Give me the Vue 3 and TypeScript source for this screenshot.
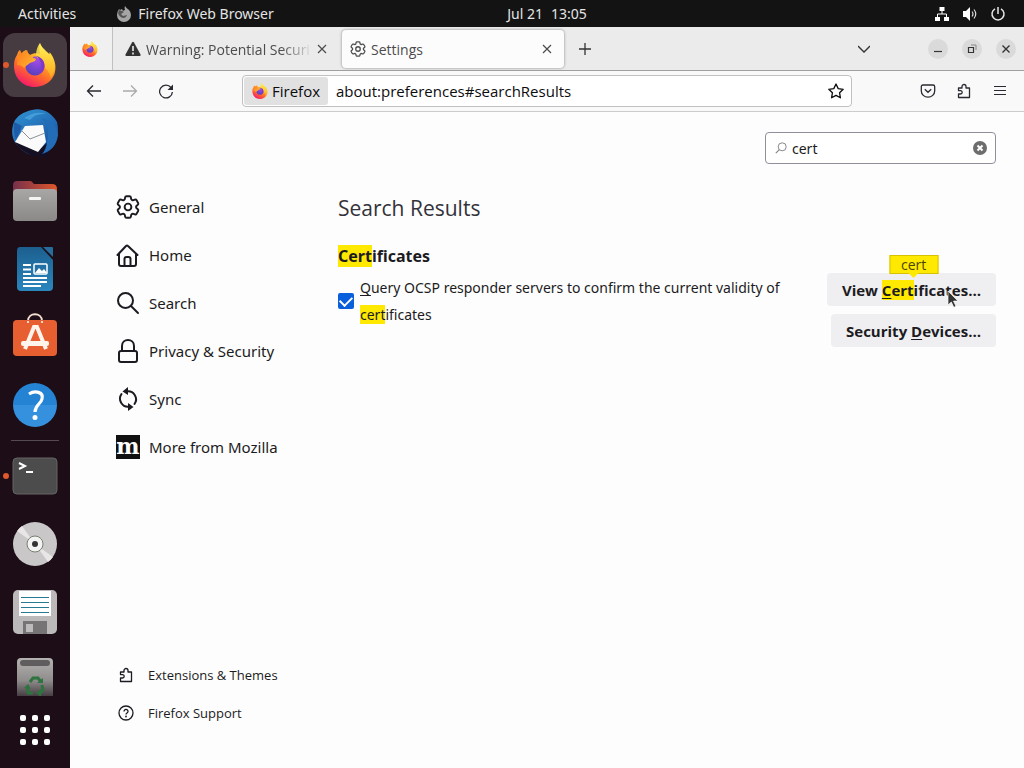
<script setup lang="ts">
import { ref } from 'vue'

interface NavItem {
  label: string
  icon: string
}

const categories: NavItem[] = [
  { label: 'General', icon: 'gear' },
  { label: 'Home', icon: 'home' },
  { label: 'Search', icon: 'search' },
  { label: 'Privacy & Security', icon: 'lock' },
  { label: 'Sync', icon: 'sync' },
  { label: 'More from Mozilla', icon: 'mozilla' },
]

const footerLinks: NavItem[] = [
  { label: 'Extensions & Themes', icon: 'puzzle' },
  { label: 'Firefox Support', icon: 'help' },
]

const apps = [
  { name: 'Firefox', icon: 'firefox', active: true, running: true },
  { name: 'Thunderbird', icon: 'thunderbird' },
  { name: 'Files', icon: 'files' },
  { name: 'Writer', icon: 'writer' },
  { name: 'Software', icon: 'software' },
  { name: 'Help', icon: 'yelp' },
]

const places = [
  { name: 'Terminal', icon: 'terminal', running: true },
  { name: 'Disc', icon: 'disc' },
  { name: 'Floppy', icon: 'floppy' },
  { name: 'Trash', icon: 'trash', clipped: true },
]

const query = ref('cert')
const address = ref('about:preferences#searchResults')
const ocsp = ref(true)
</script>

<template>
  <div class="desktop">
    <svg class="defs" aria-hidden="true">
      <defs>
        <linearGradient id="fxBody" x1="0.8" y1="0.05" x2="0.3" y2="1">
          <stop offset="0" stop-color="#fff44f" />
          <stop offset="0.35" stop-color="#ffb024" />
          <stop offset="0.65" stop-color="#ff6a2c" />
          <stop offset="1" stop-color="#f5166b" />
        </linearGradient>
        <radialGradient id="fxCore" cx="0.6" cy="0.2" r="0.9">
          <stop offset="0" stop-color="#a44be8" />
          <stop offset="1" stop-color="#4b3fb8" />
        </radialGradient>
        <linearGradient id="fxTail" x1="0.6" y1="0" x2="0.6" y2="1">
          <stop offset="0" stop-color="#fff35a" />
          <stop offset="1" stop-color="#ffae1f" />
        </linearGradient>
        <linearGradient id="fxHead" x1="0" y1="0" x2="1" y2="0.6">
          <stop offset="0" stop-color="#ff7a1e" />
          <stop offset="1" stop-color="#ffb22e" />
        </linearGradient>
        <linearGradient id="blueBird" x1="0.2" y1="0" x2="0.8" y2="1">
          <stop offset="0" stop-color="#2f8fd0" />
          <stop offset="1" stop-color="#154a9c" />
        </linearGradient>
        <linearGradient id="folderBack" x1="0" y1="0" x2="1" y2="0">
          <stop offset="0" stop-color="#76304a" />
          <stop offset="1" stop-color="#e0562b" />
        </linearGradient>
        <linearGradient id="silver" x1="0" y1="0" x2="0" y2="1">
          <stop offset="0" stop-color="#a9a7a6" />
          <stop offset="1" stop-color="#8b8988" />
        </linearGradient>
        <linearGradient id="docBlue" x1="0" y1="0" x2="0" y2="1">
          <stop offset="0" stop-color="#1c5f8f" />
          <stop offset="1" stop-color="#2a86bd" />
        </linearGradient>
        <linearGradient id="helpBlue" x1="0" y1="0" x2="0" y2="1">
          <stop offset="0.5" stop-color="#2583d3" />
          <stop offset="0.5" stop-color="#3590dd" />
        </linearGradient>
        <linearGradient id="trashFade" x1="0" y1="0" x2="0" y2="1">
          <stop offset="0" stop-color="#b5b3b2" />
          <stop offset="0.5" stop-color="#8f8c8c" />
          <stop offset="0.85" stop-color="#453c42" />
        </linearGradient>
      </defs>
      <symbol id="firefox" viewBox="0 0 44 44">
        <path d="M27 0c1 4 5 7 9 11q1 0 .5-2c5 6 7.500 14 5 22-3 8-11 13-20 13C10 44 1 35 1 23c0-5 1-8 3-11q1-4 3-5 0 3 1 4 2-3 5-4 1 4 4 5c3-2 7-2 10-1-1-5-1-8 0-11z" fill="url(#fxBody)" />
        <circle cx="22" cy="23" r="9.500" fill="url(#fxCore)" />
        <path d="M27 0c1 4 5 7 9 11 6 6 8 14 2 24-1-4-2-7-6-10 0-6-3-9-8-10-2-5 0-11 3-15z" fill="url(#fxTail)" opacity=".85" />
        <path d="M23 13c6 1 10 6 8 13-1 3-4 5-7 6 6-5 6-14-1-19z" fill="#8038c8" />
        <path d="M5 12q1-4 2-5l2 4q2-3 5-4 1 4 3 5c2 2 4 3 6 4 0 2-3 3-6 4-2 2-5 3-6 5-1-2-4-3-7-3z" fill="url(#fxHead)" />
      </symbol>
      <symbol id="firefox-mono" viewBox="0 0 16 16">
        <path d="M9 0q1 2 4 4 2 2 2 5a7 7 0 0 1-14 0q0-3 2-6l1 1 2-1 1 2q1-1 2-1-1-2 0-4z" fill="#a5a5a5" />
        <path d="M3 4l3 1 2 1-3 2 2 2 4-1q-1 3-4 3-4-1-5-5z" fill="#555" />
      </symbol>
      <symbol id="thunderbird" viewBox="0 0 48 48">
        <path d="M21 1c10-3 20 3 25 12 3 12-1 24-13 33-8 2-18 0-25-8C0 31 0 21 3 13 6 7 12 3 21 1z" fill="url(#blueBird)" />
        <path d="M13 9q12-8 22-4-11-1-16 6z" fill="#55b0e4" opacity=".6" />
        <path d="M4 33l25 7 7-6q4 6 0 14-8 1-16-2Q8 41 4 33z" fill="#140f22" />
        <path d="M14 17L32 16 35 33 27 43 4 33z" fill="#fafafa" />
        <path d="M10 21l9 9 15-6" fill="none" stroke="#8a9097" />
        <path d="M30 9q10 9 6 24-1 8-5 12 14-4 16-19Q46 13 30 9z" fill="#236db8" />
        <path d="M3 13q-1 10 2 18l6-14z" fill="#1d5ca9" />
      </symbol>
      <symbol id="files" viewBox="0 0 46 42">
        <path d="M1 14V5q0-4 4-4h13q2 0 3 2l1 1h18q5 0 5 5v7z" fill="url(#folderBack)" />
        <rect x="1" y="9" width="44" height="32" rx="4" fill="url(#silver)" />
        <rect x="17" y="17" width="12" height="3" rx="1" fill="#f5f5f5" />
      </symbol>
      <symbol id="writer" viewBox="0 0 38 46">
        <path d="M4 1h21l12 13v27q0 4-4 4H5q-4 0-4-4V5q0-4 3-4z" fill="url(#docBlue)" />
        <path d="M27 1h9q1 0 1 1v9z" fill="#286c9c" />
        <path d="M7 19h8M7 23.500h8M7 28h8M7 32h24M7 36h24M7 40h18" stroke="#fff" stroke-width="2" />
        <rect x="18" y="18" width="13" height="10" rx="1" fill="none" stroke="#fff" stroke-width="1.500" />
        <path d="M19 27l4-5 3 3 2-2 3 4z" fill="#fff" />
      </symbol>
      <symbol id="software" viewBox="0 0 46 44">
        <path d="M16 8c0-9 14-9 14 0" fill="none" stroke="#f4dccf" stroke-width="2" />
        <rect x="1" y="7" width="44" height="36" rx="4" fill="#e75f31" />
        <path d="M16 8v2M30 8v2" stroke="#fff" stroke-width="1.500" />
        <path d="M13 36l9-22h3l9 22" fill="none" stroke="#fff4ec" stroke-width="4" />
        <rect x="9" y="28" width="28" height="5" rx="2" fill="#fff4ec" />
      </symbol>
      <symbol id="yelp" viewBox="0 0 46 46">
        <circle cx="23" cy="23" r="22" fill="url(#helpBlue)" />
        <path d="M17 12c6-4 15-2 13 5-1 5-7 6-7 13" fill="none" stroke="#fff" stroke-width="3.200" />
        <circle cx="23" cy="35.500" r="2.500" fill="#fff" />
      </symbol>
      <symbol id="terminal" viewBox="0 0 46 38">
        <rect x="1" y="1" width="44" height="36" rx="4" fill="#4c4c4c" stroke="#656565" />
        <path d="M7 6l6 3-6 3M14 15h7" fill="none" stroke="#fff" stroke-width="2" />
      </symbol>
      <symbol id="disc" viewBox="0 0 46 46">
        <circle cx="23" cy="23" r="22" fill="#c9c7c8" />
        <path d="M5 10l36 26q-2 3-5 5L10 5q-3 2-5 5z" fill="#e8e6e7" />
        <circle cx="23" cy="23" r="8" fill="#f3f3f3" stroke="#77806f" />
        <circle cx="23" cy="23" r="3" fill="#333" />
      </symbol>
      <symbol id="floppy" viewBox="0 0 46 46">
        <rect x="1" y="1" width="44" height="44" rx="5" fill="#bcb9ba" />
        <rect x="7" y="2" width="32" height="25" fill="#fff" />
        <path d="M9 8.500h28M9 13.500h28M9 18.500h28M9 23.500h28" stroke="#287a93" />
        <path d="M11 32h24v13H11z" fill="#777475" />
        <path d="M14 35h7v8h-7z" fill="#bdbbbb" />
      </symbol>
      <symbol id="trash" viewBox="0 0 38 46">
        <path d="M1 46V5q0-4 4-4h28q4 0 4 4v41z" fill="url(#trashFade)" />
        <rect x="4" y="3" width="30" height="6" rx="3" fill="#5f5d5d" />
        <path d="M14 25l3-4h5l3 4M26 28l1 5-3 3M17 36h-5l-1-6" fill="none" stroke="#2d743e" stroke-width="3" />
        <path d="M21 26h6v-5zM25 32l-5 4 5 4zM8 31l4-4 3 5z" fill="#2d743e" />
      </symbol>
      <symbol id="gear" viewBox="2 2 20 20">
        <path d="M9.594 3.940c.09-.542.56-.94 1.110-.94h2.593c.55 0 1.020.398 1.110.94l.213 1.281c.063.374.313.686.645.87.074.04.147.083.22.127.325.196.72.257 1.075.124l1.217-.456a1.125 1.125 0 0 1 1.370.49l1.296 2.247a1.125 1.125 0 0 1-.26 1.431l-1.003.827c-.293.241-.438.613-.43.992a7.723 7.723 0 0 1 0 .255c-.008.378.137.75.43.991l1.004.827c.424.35.534.955.26 1.430l-1.298 2.247a1.125 1.125 0 0 1-1.369.491l-1.217-.456c-.355-.133-.75-.072-1.076.124a6.470 6.470 0 0 1-.22.128c-.331.183-.581.495-.644.869l-.213 1.281c-.09.543-.56.94-1.110.94h-2.594c-.55 0-1.019-.398-1.110-.94l-.213-1.281c-.062-.374-.312-.686-.644-.87a6.520 6.520 0 0 1-.22-.127c-.325-.196-.72-.257-1.076-.124l-1.217.456a1.125 1.125 0 0 1-1.369-.49l-1.297-2.247a1.125 1.125 0 0 1 .26-1.431l1.004-.827c.292-.24.437-.613.43-.991a6.932 6.932 0 0 1 0-.255c.007-.38-.138-.751-.43-.992l-1.004-.827a1.125 1.125 0 0 1-.26-1.430l1.297-2.247a1.125 1.125 0 0 1 1.370-.491l1.216.456c.356.133.751.072 1.076-.124.072-.044.146-.087.22-.128.332-.183.582-.495.644-.869l.214-1.280Z" fill="none" stroke="currentColor" stroke-width="1.600" />
        <circle cx="12" cy="12" r="2.800" fill="none" stroke="currentColor" stroke-width="1.600" />
      </symbol>
      <symbol id="home" viewBox="0 0 24 24">
        <path d="M1.500 12L10 3q1-1 2 0l9.500 9M3 11v10q0 2 2 2h13q2 0 2-2V11M8.500 23v-7q0-2 2-2h2q2 0 2 2v7" fill="none" stroke="currentColor" stroke-width="2" stroke-linecap="round" stroke-linejoin="round" />
      </symbol>
      <symbol id="search" viewBox="0 0 24 24">
        <circle cx="9.500" cy="9.500" r="7.500" fill="none" stroke="currentColor" stroke-width="2" />
        <path d="M15 15l7 7" stroke="currentColor" stroke-width="2" stroke-linecap="round" />
      </symbol>
      <symbol id="lock" viewBox="0 0 24 24">
        <path d="M6 12V7c0-8 12-8 12 0v5" fill="none" stroke="currentColor" stroke-width="2" />
        <rect x="3" y="12" width="18" height="11" rx="2" fill="none" stroke="currentColor" stroke-width="2" />
      </symbol>
      <symbol id="sync" viewBox="0 0 24 24">
        <path d="M10.500 4.500a8 8 0 0 1 8 12.500M5.500 7a8 8 0 0 0 8 12.500" fill="none" stroke="currentColor" stroke-width="2" stroke-linecap="round" />
        <path d="M12 0v8L6.500 4.500zM12 16v8l5.500-4z" fill="currentColor" />
      </symbol>
      <symbol id="puzzle" viewBox="0 0 16 16">
        <path d="M3 5h3V3.500a2 2 0 0 1 4 0V5h3.500v9.500h-11V11h2a1.700 1.700 0 0 0 0-3.400H2.500V5z" fill="none" stroke="currentColor" stroke-width="1.300" stroke-linejoin="round" />
      </symbol>
      <symbol id="help" viewBox="0 0 16 16">
        <circle cx="8" cy="8" r="7" fill="none" stroke="currentColor" stroke-width="1.300" />
        <path d="M6 6.500c0-3 4.200-2.500 4 0 0 1.500-2 1.500-2 3" fill="none" stroke="currentColor" stroke-width="1.300" />
        <circle cx="8" cy="11.500" r=".9" fill="currentColor" />
      </symbol>
      <symbol id="close" viewBox="0 0 10 10">
        <path d="M1 1l8 8M9 1L1 9" fill="none" stroke="currentColor" stroke-width="1.200" />
      </symbol>
    </svg>

    <header class="panel">
      <div class="panel-left">
        <button class="panel-btn">Activities</button>
        <button class="panel-btn app-menu">
          <svg class="i16"><use href="#firefox-mono" /></svg>Firefox Web Browser
        </button>
      </div>
      <button class="panel-btn clock"><span>Jul 21</span><span>13:05</span></button>
      <button class="panel-btn status" aria-label="System menu">
        <svg class="i16" viewBox="0 0 16 16"><path d="M5.500 1h5v4h-5zM1 11h5v4H1zM10 11h5v4h-5z" fill="#fff" /><path d="M8 5v3M3.500 11V8h9v3" fill="none" stroke="#fff" /></svg>
        <svg class="i16" viewBox="0 0 16 16"><path d="M1 5h3l4-4v14l-4-4H1z" fill="#fff" /><path d="M10 5.500q2 2.500 0 5M12 3.500q3.500 4.500 0 9" fill="none" stroke="#ddd" stroke-width="1.200" /></svg>
        <svg class="i16" viewBox="0 0 16 16"><path d="M5 2.800a6 6 0 1 0 6 0M8 1v7" fill="none" stroke="#e6e6e6" stroke-width="1.500" /></svg>
      </button>
    </header>

    <div class="workspace">
      <nav class="dock" aria-label="Dock">
        <div v-for="a in apps" :key="a.name" class="slot">
          <i v-if="a.running" class="dot"></i>
          <button class="tile" :class="{ active: a.active }" :aria-label="a.name">
            <svg :class="'app-' + a.icon"><use :href="'#' + a.icon" /></svg>
          </button>
        </div>
        <hr class="dock-line" />
        <div v-for="p in places" :key="p.name" class="slot" :class="{ clipped: p.clipped }">
          <i v-if="p.running" class="dot"></i>
          <button class="tile" :aria-label="p.name">
            <svg :class="'app-' + p.icon"><use :href="'#' + p.icon" /></svg>
          </button>
        </div>
        <button class="show-apps" aria-label="Show applications">
          <i v-for="n in 9" :key="n"></i>
        </button>
      </nav>

      <div class="window">
        <div class="tabs">
          <button class="pinned" aria-label="Firefox View"><svg class="i16"><use href="#firefox" /></svg></button>
          <div class="tab">
            <svg class="i16" viewBox="0 0 16 16"><path d="M7 1.500q1-1.500 2 0l6.500 12q.5 1.500-1 1.500h-13q-1.500 0-1-1.500z" fill="#333" /><path d="M8 5v5M8 11.500v2" stroke="#eee" stroke-width="1.600" /></svg>
            <span class="tab-label faded">Warning: Potential Securi</span>
            <button class="tab-close" aria-label="Close tab"><svg><use href="#close" /></svg></button>
          </div>
          <div class="tab current">
            <svg class="i16"><use href="#gear" /></svg>
            <span class="tab-label">Settings</span>
            <button class="tab-close" aria-label="Close tab"><svg><use href="#close" /></svg></button>
          </div>
          <button class="new-tab" aria-label="New tab"><svg viewBox="0 0 12 12"><path d="M6 0v12M0 6h12" stroke="currentColor" stroke-width="1.300" /></svg></button>
          <span class="grow"></span>
          <button class="all-tabs" aria-label="List all tabs"><svg viewBox="0 0 12 8"><path d="M0 1l6 6 6-6" fill="none" stroke="currentColor" stroke-width="1.300" /></svg></button>
          <div class="controls">
            <button aria-label="Minimize"><svg viewBox="0 0 10 10"><path d="M1 7.500h8" stroke="currentColor" stroke-width="1.200" /></svg></button>
            <button aria-label="Restore"><svg viewBox="0 0 10 10"><path d="M1.500 3.500h5v5h-5z" fill="none" stroke="currentColor" stroke-width="1.200" /><path d="M4 1h5v5" fill="none" stroke="#888" /></svg></button>
            <button aria-label="Close"><svg viewBox="0 0 10 10"><path d="M1.500 1.500l7 7M8.500 1.500l-7 7" stroke="currentColor" stroke-width="1.400" /></svg></button>
          </div>
        </div>

        <div class="toolbar">
          <div class="history">
            <button aria-label="Back"><svg viewBox="0 0 16 16"><path d="M15 8H1.500M7 2.500L1.500 8 7 13.500" fill="none" stroke="currentColor" stroke-width="1.300" /></svg></button>
            <button aria-label="Forward" disabled><svg viewBox="0 0 16 16"><path d="M1 8h13.500M9 2.500L14.500 8 9 13.500" fill="none" stroke="currentColor" stroke-width="1.300" /></svg></button>
            <button aria-label="Reload"><svg viewBox="0 0 16 16"><path d="M13 4.500A6.400 6.400 0 1 0 14.400 9" fill="none" stroke="currentColor" stroke-width="1.300" /><path d="M15 1.500V7H9.500z" fill="currentColor" /></svg></button>
          </div>
          <div class="urlbar">
            <button class="identity"><svg class="i16"><use href="#firefox" /></svg>Firefox</button>
            <input v-model="address" aria-label="Address" spellcheck="false" />
            <button class="star" aria-label="Bookmark this page"><svg class="i16" viewBox="0 0 16 16"><path d="M8 1l2.200 4.600 5 .7-3.600 3.500.8 5L8 12.400 3.600 14.800l.8-5L.8 6.300l5-.7z" fill="none" stroke="currentColor" stroke-width="1.300" stroke-linejoin="round" /></svg></button>
          </div>
          <div class="tools">
            <button aria-label="Save to Pocket"><svg viewBox="0 0 16 16"><path d="M3 2h10q1.700 0 1.700 1.700V8a6.700 6.200 0 0 1-13.400 0V3.700Q1.300 2 3 2zM4.800 6.200L8 9.300l3.200-3.100" fill="none" stroke="currentColor" stroke-width="1.300" /></svg></button>
            <button aria-label="Extensions"><svg><use href="#puzzle" /></svg></button>
            <button aria-label="Menu"><svg viewBox="0 0 16 16"><path d="M2 3.500h12M2 7.500h12M2 11.500h12" stroke="currentColor" stroke-width="1.200" /></svg></button>
          </div>
        </div>

        <div class="page">
          <aside class="sidebar">
            <nav class="categories">
              <a v-for="c in categories" :key="c.label" href="#">
                <span v-if="c.icon === 'mozilla'" class="moz" aria-hidden="true">m</span>
                <svg v-else><use :href="'#' + c.icon" /></svg>{{ c.label }}
              </a>
            </nav>
            <nav class="footer-links">
              <a v-for="f in footerLinks" :key="f.label" href="#"><svg><use :href="'#' + f.icon" /></svg>{{ f.label }}</a>
            </nav>
          </aside>
          <main class="content">
            <div class="search">
              <svg class="lens" viewBox="0 0 12 12"><circle cx="7.200" cy="4.800" r="4" fill="none" stroke="#888" /><path d="M4.300 7.700L.8 11.200" stroke="#888" stroke-width="1.200" /></svg>
              <input v-model="query" aria-label="Find in Settings" spellcheck="false" />
              <button class="clear" aria-label="Clear"><svg viewBox="0 0 14 14"><circle cx="7" cy="7" r="7" fill="#6d6d6d" /><path d="M4.500 4.500l5 5M9.500 4.500l-5 5" stroke="#fff" stroke-width="2" /></svg></button>
            </div>
            <h1>Search Results</h1>
            <h2><mark>Cert</mark>ificates</h2>
            <div class="row">
              <div class="check">
                <input id="ocsp" v-model="ocsp" type="checkbox" />
                <label for="ocsp"><u>Q</u>uery OCSP responder servers to confirm the current validity of <mark>cert</mark>ificates</label>
              </div>
              <div class="actions">
                <button class="push">View <span class="match"><mark><u>C</u>ert</mark><span class="tip">cert</span></span>ificates…
                  <svg class="pointer" viewBox="0 0 12 18" aria-hidden="true"><path d="M1 1v14l3.300-3 2.500 5.300 2.200-1-2.500-5.200H11z" fill="#333" stroke="#fff" stroke-width=".7" /></svg>
                </button>
                <button class="push">Security <u>D</u>evices…</button>
              </div>
            </div>
          </main>
        </div>
      </div>
    </div>
  </div>
</template>

<style>
html,
body {
  background: #131313;
}
</style>

<style scoped>
* {
  box-sizing: border-box;
}
.desktop {
  display: flex;
  flex-direction: column;
  height: 100vh;
  min-height: 640px;
  font-family: "Noto Sans", "Open Sans", sans-serif;
  font-size: 14px;
  color: #1c1b22;
}
.defs {
  position: absolute;
  width: 0;
  height: 0;
}
button {
  font: inherit;
  color: inherit;
  border: 0;
  padding: 0;
  background: none;
  display: flex;
  align-items: center;
  justify-content: center;
}
input {
  font: inherit;
  color: inherit;
  border: 0;
  padding: 0;
  background: none;
  outline: none;
  min-width: 0;
}
svg {
  display: block;
  flex: none;
}
.i16 {
  width: 16px;
  height: 16px;
}
.grow {
  flex: 1;
}

.panel {
  display: grid;
  grid-template-columns: 1fr auto 1fr;
  align-items: center;
  height: 27px;
  flex: none;
  padding: 0 18px;
  background: #131313;
  color: #e4e4e4;
}
.panel-left {
  display: flex;
  gap: 40px;
  white-space: nowrap;
}
.app-menu {
  gap: 6px;
}
.clock {
  gap: 8px;
  margin-left: 70px;
}
.status {
  justify-self: end;
  gap: 12px;
}

.workspace {
  display: flex;
  flex: 1;
  min-height: 0;
}
.dock {
  display: flex;
  flex-direction: column;
  align-items: center;
  width: 70px;
  flex: none;
  padding: 4px 0;
  background: #1c0d17;
}
.slot {
  position: relative;
  display: flex;
  align-items: center;
  justify-content: center;
  width: 100%;
  height: 68px;
  flex: none;
}
.slot.clipped {
  height: 50px;
  align-items: flex-start;
  padding-top: 2px;
  overflow: hidden;
}
.tile {
  width: 64px;
  height: 64px;
  flex: none;
  border-radius: 12px;
}
.tile.active {
  background: #463b41;
}
.dot {
  position: absolute;
  left: 3px;
  top: 31px;
  width: 6px;
  height: 6px;
  border-radius: 50%;
  background: #e0582c;
}
.app-firefox {
  width: 44px;
  height: 44px;
}
.app-thunderbird {
  width: 48px;
  height: 48px;
}
.app-files {
  width: 46px;
  height: 42px;
}
.app-writer,
.app-trash {
  width: 38px;
  height: 46px;
}
.app-software {
  width: 46px;
  height: 44px;
  margin-bottom: 4px;
}
.app-yelp,
.app-disc,
.app-floppy {
  width: 46px;
  height: 46px;
}
.app-terminal {
  width: 46px;
  height: 38px;
}
.dock-line {
  width: 48px;
  height: 1px;
  margin: 1px 0;
  border: 0;
  background: #554a50;
}
.show-apps {
  display: grid;
  grid-template-columns: repeat(3, 6px);
  gap: 6px;
  flex: 1;
  align-content: center;
}
.show-apps i {
  width: 6px;
  height: 6px;
  border-radius: 2px;
  background: #fff;
}

.window {
  display: flex;
  flex-direction: column;
  flex: 1;
  min-width: 0;
  background: #fdfdfd;
}
.tabs {
  display: flex;
  align-items: center;
  height: 44px;
  flex: none;
  padding-right: 8px;
  background: #ebebeb;
  border-bottom: 1px solid #a0a0a0;
  color: #333;
}
.pinned {
  width: 43px;
  align-self: stretch;
  padding-right: 2px;
  border-right: 1px solid #c0c0c0;
  background: #f0f0f0;
}
.tab {
  display: flex;
  align-items: center;
  gap: 5px;
  width: 222px;
  height: 38px;
  margin-left: 6px;
  padding: 0 11px 0 6px;
  border-radius: 4px;
  font-family: "Open Sans", "Noto Sans", sans-serif;
  color: #4c4c4c;
}
.tab.current {
  margin-left: 1px;
  padding: 0 9px 0 8px;
  background: #fcfcfc;
  box-shadow: 0 0 3px #888;
}
.tab-label {
  flex: 1;
  min-width: 0;
  padding-top: 1px;
  overflow: hidden;
  white-space: nowrap;
}
.faded {
  margin-right: -4px;
  mask-image: linear-gradient(to left, transparent, #000 32px);
}
.tab-close svg {
  width: 10px;
  height: 10px;
}
.tab-close {
  width: 16px;
  height: 16px;
  flex: none;
}
.new-tab {
  width: 42px;
  height: 32px;
}
.new-tab svg {
  width: 12px;
}
.all-tabs svg {
  width: 12px;
}
.controls {
  display: flex;
  gap: 14px;
  margin-left: 58px;
}
.controls button {
  width: 20px;
  height: 20px;
  border-radius: 50%;
  background: #dadada;
}
.controls svg {
  width: 10px;
}

.toolbar {
  display: flex;
  align-items: center;
  height: 41px;
  flex: none;
  padding: 0 16px;
  background: #f9f9f9;
  border-bottom: 1px solid #ccc;
}
.history,
.tools {
  display: flex;
  gap: 20px;
  color: #2b2a33;
}
.history svg,
.tools svg {
  width: 16px;
  height: 16px;
}
.history button:disabled {
  color: #aaa;
}
.urlbar {
  display: flex;
  align-items: center;
  flex: 1;
  height: 32px;
  margin: 0 68px;
  padding: 1px;
  border: 1px solid #c0c0c0;
  border-radius: 4px;
  background: #fff;
  color: #0c0c0d;
  font-family: "Open Sans", "Noto Sans", sans-serif;
  font-size: 15px;
}
.identity {
  gap: 4px;
  height: 28px;
  padding: 0 8px;
  border-radius: 3px;
  background: #e1e1e1;
}
.urlbar input {
  flex: 1;
  margin-left: 8px;
}
.star {
  width: 28px;
}

.page {
  display: flex;
  flex: 1;
  min-height: 0;
}
.sidebar {
  display: flex;
  flex-direction: column;
  justify-content: space-between;
  width: 268px;
  flex: none;
  padding: 71px 0 36px 46px;
}
.sidebar a {
  display: flex;
  align-items: center;
  color: #1c1b22;
  text-decoration: none;
}
.categories a {
  gap: 9px;
  height: 48px;
  font-size: 15px;
}
.categories svg,
.moz {
  width: 24px;
  height: 24px;
}
.moz {
  background: #111;
  color: #fff;
  font: 700 22px/22px "DejaVu Serif", serif;
  display: flex;
  justify-content: center;
}
.footer-links a {
  gap: 14px;
  height: 38px;
  padding-left: 2px;
  font-family: "Open Sans", "Noto Sans", sans-serif;
  font-size: 13px;
}
.footer-links svg {
  width: 16px;
  height: 16px;
}
.content {
  flex: 1;
  min-width: 0;
  padding: 20px 28px 0 0;
}
.search {
  display: flex;
  align-items: center;
  gap: 5px;
  width: 231px;
  height: 32px;
  margin-left: auto;
  padding: 0 8px 0 9px;
  border: 1px solid #8f8f9d;
  border-radius: 4px;
  background: #fff;
}
.search input {
  flex: 1;
}
.lens {
  width: 12px;
  height: 12px;
}
.clear svg {
  width: 14px;
  height: 14px;
}
h1 {
  margin: 28px 0 0;
  font-family: "Open Sans", "Noto Sans", sans-serif;
  font-size: 21px;
  line-height: 32px;
  font-weight: 400;
  color: #33323a;
}
h2 {
  margin: 20px 0 0;
  font-size: 16px;
  line-height: 24px;
  font-weight: 700;
}
mark {
  background: #ffe900;
  color: inherit;
}
.row {
  display: flex;
  justify-content: space-between;
  margin-top: 5px;
}
.check {
  display: flex;
  align-items: center;
  gap: 6px;
  max-width: 470px;
  height: 56px;
  line-height: 27px;
}
.check input {
  appearance: none;
  width: 16px;
  height: 16px;
  flex: none;
  margin: 0;
  border-radius: 2px;
  background: #0a5fdc;
  display: grid;
  place-items: center;
}
.check input:checked::after {
  content: "";
  width: 10px;
  height: 6px;
  margin-top: -3px;
  border: solid #fff;
  border-width: 0 0 2px 2px;
  transform: rotate(-45deg);
}
u {
  text-underline-offset: 2px;
}
.actions {
  display: flex;
  flex-direction: column;
  align-items: flex-end;
  gap: 8px;
}
.push {
  position: relative;
  display: block;
  height: 33px;
  padding: 0 15px;
  border-radius: 4px;
  background: #efeff1;
  font-family: "Open Sans", "Noto Sans", sans-serif;
  font-size: 15px;
  font-weight: 700;
  white-space: nowrap;
}
.match {
  position: relative;
}
.tip {
  position: absolute;
  left: 100%;
  bottom: 26px;
  transform: translateX(-50%);
  width: 49px;
  height: 19px;
  line-height: 17px;
  border: 1px solid #d6c200;
  background: #ffe900;
  font-size: 14px;
  font-weight: 400;
  text-align: center;
  color: #4a4400;
}
.tip::after {
  content: "";
  position: absolute;
  left: 50%;
  top: 100%;
  margin-left: -5px;
  border: 5px solid transparent;
  border-top-color: #ffe900;
}
.pointer {
  position: absolute;
  right: 37px;
  top: 17px;
  width: 12px;
  height: 18px;
}
</style>
